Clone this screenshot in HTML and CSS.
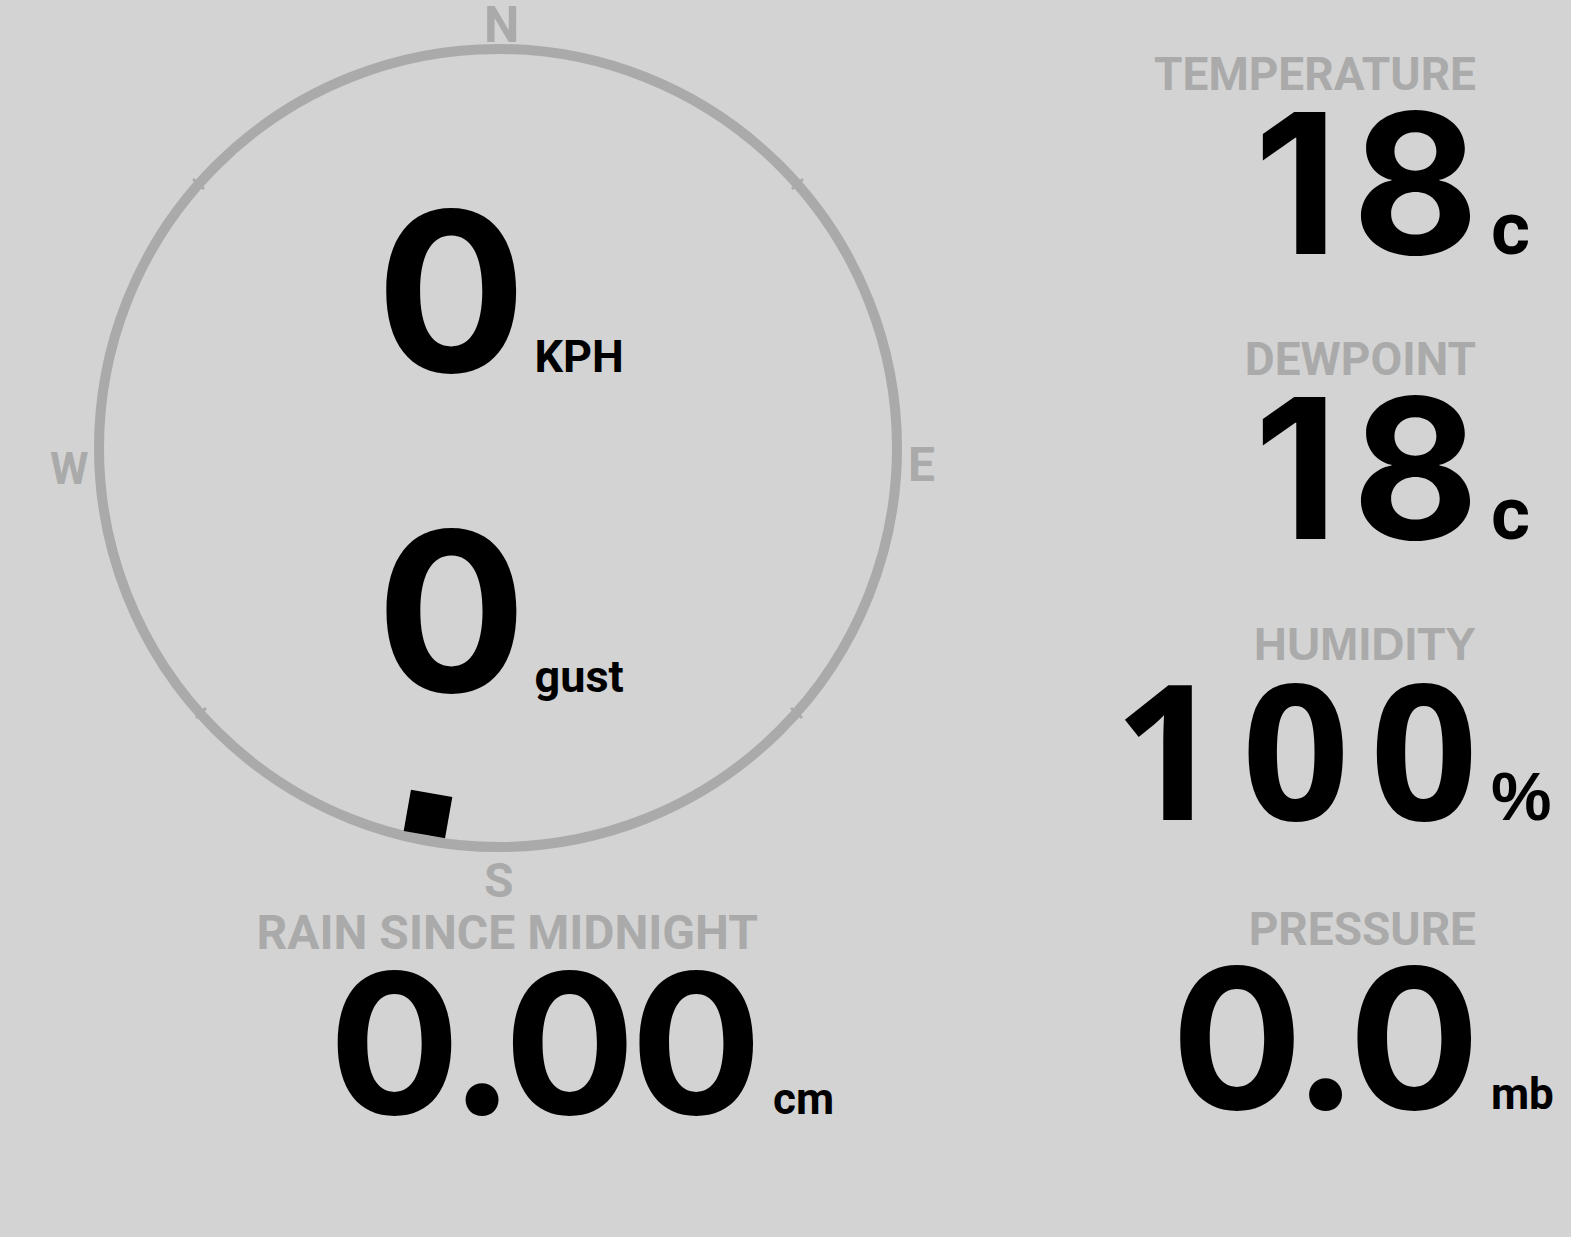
FILE: index.html
```html
<!DOCTYPE html>
<html lang="en">
<head>
    <meta charset="UTF-8">
    <title>Weather</title>
    <link rel="stylesheet" href="styles.css">
</head>
<body>
    <div class="page">
        <!-- 左侧：风向盘 + 雨量 -->
        <div class="leftSide">
            <div class="compass">
                <svg class="dial" width="1000" height="909" viewBox="0 0 1000 909">
                    <circle cx="498" cy="448" r="399" fill="none" stroke="#aaaaaa" stroke-width="10"/>
                    <!-- 刻度小缺口 -->
                    <g stroke="#aaaaaa" stroke-width="3">
                        <line x1="792" y1="189" x2="803" y2="179"/>
                        <line x1="204" y1="189" x2="193" y2="179"/>
                        <line x1="206" y1="708" x2="196" y2="718"/>
                        <line x1="791" y1="708" x2="802" y2="718"/>
                    </g>
                    <rect x="-21" y="-21" width="42" height="42" fill="#000" transform="translate(428 814) rotate(10)"/>
                </svg>
                <span class="dir dirN">N</span>
                <span class="dir dirW">W</span>
                <span class="dir dirE">E</span>
                <span class="dir dirS">S</span>

                <div class="speeds">
                    <div class="speed">
                        <span class="speedNum">0</span><span class="speedUnit">KPH</span>
                    </div>
                    <div class="speed">
                        <span class="speedNum">0</span><span class="speedUnit">gust</span>
                    </div>
                </div>
            </div>

            <div class="reading rain">
                <div class="label">RAIN SINCE MIDNIGHT</div>
                <div class="num">0.00</div><div class="unit small">cm</div>
            </div>
        </div>

        <!-- 右侧：温度、露点、湿度、气压 -->
        <div class="rightSide">
            <div class="reading">
                <div class="label">TEMPERATURE</div>
                <div class="num spaced">18</div><div class="unit big">c</div>
            </div>
            <div class="reading">
                <div class="label">DEWPOINT</div>
                <div class="num spaced">18</div><div class="unit big">c</div>
            </div>
            <div class="reading humid">
                <div class="label">HUMIDITY</div>
                <div class="num">100</div><div class="unit pct">%</div>
            </div>
            <div class="reading">
                <div class="label">PRESSURE</div>
                <div class="num">0.0</div><div class="unit small">mb</div>
            </div>
        </div>
    </div>
</body>
</html>
```

FILE: styles.css
```css
body{
    margin: 0;
    background: #d3d3d3;
    font-family: Roboto, "Liberation Sans", sans-serif;
    font-weight: bold;
    color: #000;
}
.page{
    display: flex;
    width: 1571px;
}
.leftSide{
    width: 1000px;
}
.rightSide{
    width: 571px;
    padding-top: 51px;
}

/* 风向盘 */
.compass{
    position: relative;
    width: 1000px;
    height: 909px;
}
.dial{
    position: absolute;
    left: 0;
    top: 0;
}
.dir{
    position: absolute;
    color: #aaaaaa;
    font-size: 48px;
    line-height: 48px;
}
.dirN{ left: 484px; top: 0; font-size: 50px; line-height: 50px; }
.dirS{ left: 484px; top: 857px; }
.dirW{ left: 50px; top: 445px; font-size: 44px; }
.dirE{ left: 908px; top: 441px; }

.speeds{
    position: relative;
    display: flex;
    flex-direction: column;
    align-items: center;
    gap: 120px;
    padding-top: 191px;
}
.speed{
    display: flex;
    align-items: baseline;
}
.speedNum{
    font-family: Inter, Roboto, sans-serif;
    font-size: 223px;
    line-height: 200px;
}
.speedUnit{
    font-size: 45px;
    line-height: 40px;
    margin-left: 8px;
}

/* 数值块 */
.reading{
    display: grid;
    grid-template-columns: 476px 95px;
    align-items: baseline;
    margin-bottom: 78px;
}
.reading .label{
    grid-column: 1;
    text-align: right;
    color: #aaaaaa;
    font-size: 46px;
    line-height: 46px;
    margin-bottom: 11px;
}
.reading .num{
    grid-column: 1;
    text-align: right;
    font-family: Inter, Roboto, sans-serif;
    font-size: 195px;
    line-height: 150px;
    letter-spacing: -4px;
    margin-right: 0;
}
.reading .num.spaced{
    letter-spacing: 14px;
    margin-right: -17px;
}
.reading .unit{
    grid-column: 2;
    line-height: 40px;
    padding-left: 15px;
}
.unit.big{ font-size: 75px; }
.unit.small{ font-size: 44px; }
.unit.pct{
    font-family: "Liberation Sans", sans-serif;
    font-size: 68px;
}

.humid{
    margin-bottom: 84px;
}
.humid .label{
    font-family: "Liberation Sans", sans-serif;
    margin-bottom: 5px;
}
.humid .num{
    font-family: "Noto Sans", sans-serif;
    font-size: 189px;
    letter-spacing: 20px;
    margin-right: -22px;
}

.rain{
    grid-template-columns: 758px 98px;
}
.rain .label{
    font-size: 48px;
    line-height: 48px;
}
.rain .num{
    letter-spacing: -5px;
    margin-right: 1px;
}
```
